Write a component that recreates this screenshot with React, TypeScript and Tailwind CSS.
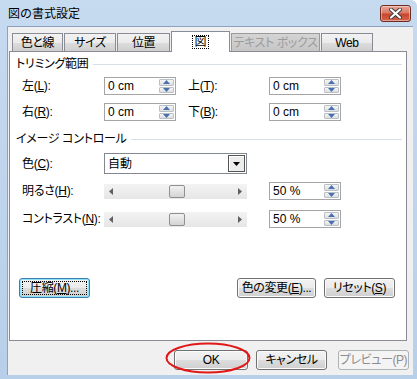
import React from "react";

const FONT = "font-['Liberation_Sans','Noto_Sans_CJK_JP',sans-serif] [font-feature-settings:'palt']";

function Spin() {
  return (
    <div className="flex flex-col w-[16px] h-full py-px pr-px gap-px">
      <div className="flex-1 flex items-center justify-center rounded-[1px] border border-[#b9c0c8] bg-gradient-to-b from-[#f6f6f6] to-[#dedede]">
        <svg width="7" height="4" viewBox="0 0 7 4"><path d="M0 4 L3.5 0 L7 4Z" fill="#4b70b0" /></svg>
      </div>
      <div className="flex-1 flex items-center justify-center rounded-[1px] border border-[#b9c0c8] bg-gradient-to-b from-[#f6f6f6] to-[#dedede]">
        <svg width="7" height="4" viewBox="0 0 7 4"><path d="M0 0 L3.5 4 L7 0Z" fill="#4b70b0" /></svg>
      </div>
    </div>
  );
}

function NumInput({ value }: { value: string }) {
  return (
    <div className="w-[72px] h-[18px] border border-[#a5a5a5] bg-white flex items-stretch">
      <div className="flex-1 flex items-center pl-[3px] text-[12px] leading-none">{value}</div>
      <Spin />
    </div>
  );
}

function Label({ main, k }: { main: string; k: string }) {
  return (
    <span className="text-[12px] leading-none whitespace-nowrap tracking-[-0.3px]">
      {main}(<span className="underline">{k}</span>):
    </span>
  );
}

function GroupLabel({ text }: { text: string }) {
  return (
    <div className="flex items-center h-[14px] pl-[6px] pr-[4px]">
      <span className="text-[12px] leading-none whitespace-nowrap tracking-[-0.3px]">{text}</span>
      <div className="flex-1 h-px bg-[#d5dfe5] ml-[5px]" />
    </div>
  );
}

function Slider({ pos }: { pos: number }) {
  return (
    <div className="w-[143px] h-[15px] bg-gradient-to-b from-[#f3f3f3] to-[#e6e6e6] flex items-center px-[5px] relative">
      <svg width="4" height="7" viewBox="0 0 4 7"><path d="M4 0 L0 3.5 L4 7Z" fill="#606060" /></svg>
      <div className="flex-1" />
      <svg width="4" height="7" viewBox="0 0 4 7"><path d="M0 0 L4 3.5 L0 7Z" fill="#606060" /></svg>
      <div
        className="absolute top-px w-[16px] h-[13px] rounded-[2px] border border-[#8e8f8f] bg-gradient-to-b from-[#f2f2f2] to-[#d4d4d4]"
        style={{ left: pos }}
      />
    </div>
  );
}

function Btn({ children, w, disabled, focused }: { children: React.ReactNode; w: string; disabled?: boolean; focused?: boolean }) {
  if (disabled) {
    return (
      <div className={`${w} h-[20px] rounded-[3px] border border-[#adb2b5] bg-[#f4f4f4] flex items-center justify-center text-[12px] leading-none whitespace-nowrap tracking-[-0.4px] text-[#8d8d8d]`}>
        {children}
      </div>
    );
  }
  return (
    <div
      className={`${w} h-[20px] rounded-[3px] border ${focused ? "border-[#3c7fb1] shadow-[inset_0_0_0_1px_#8fe1f9]" : "border-[#707070] shadow-[inset_0_0_0_1px_#fcfcfc]"} bg-[linear-gradient(to_bottom,#f2f2f2_0%,#ebebeb_50%,#dddddd_51%,#cfcfcf_100%)] flex items-center justify-center text-[12px] leading-none whitespace-nowrap tracking-[-0.4px] p-[2px]`}
    >
      <div className={`w-full h-full flex items-center justify-center ${focused ? "outline outline-1 outline-dotted outline-black -outline-offset-1" : ""}`}>
        {children}
      </div>
    </div>
  );
}

function Tab({ text, w, selected, disabled }: { text: string; w: string; selected?: boolean; disabled?: boolean }) {
  if (selected) {
    return (
      <div className={`${w} h-[21px] -mb-px relative z-10 bg-white border border-b-0 border-[#898c95] flex items-center justify-center`}>
        <span className="text-[12px] leading-[12px] px-px outline outline-1 outline-dotted outline-black">{text}</span>
      </div>
    );
  }
  return (
    <div
      className={`${w} h-[18px] border border-b-0 ${disabled ? "border-[#9a9a9a] bg-gradient-to-b from-[#d4d4d4] to-[#c6c6c6] text-[#9c9c9c]" : "border-[#898c95] bg-[linear-gradient(to_bottom,#f2f2f2_0%,#ebebeb_50%,#dddddd_51%,#cfcfcf_100%)]"} flex items-center justify-center text-[12px] leading-none whitespace-nowrap tracking-[-0.4px]`}
    >
      {text}
    </div>
  );
}

export default function App() {
  return (
    <div className={`w-[417px] h-[379px] overflow-hidden relative flex flex-col bg-gradient-to-b from-[#c6daf0] to-[#b8cfe9] rounded-tr-[6px] ${FONT} text-black`}>
      {/* title bar */}
      <div className="h-[26px] shrink-0 flex items-start pl-[8px] pr-[6px]">
        <span className="mt-[8px] text-[12px] leading-none [font-feature-settings:normal]">図の書式設定</span>
        <div className="ml-auto mt-[5px] w-[31px] h-[17px] rounded-[3px] border border-[#6e2c23] bg-[linear-gradient(to_bottom,#e8a596_0%,#d97c68_45%,#c8462e_55%,#d6634a_100%)] flex items-center justify-center shadow-[inset_0_0_0_1px_rgba(255,255,255,0.4)]">
          <svg width="13" height="11" viewBox="0 0 13 11">
            <path d="M2 1.5 L11 9.5 M11 1.5 L2 9.5" stroke="#3a3a3a" strokeWidth="4" strokeLinecap="round" />
            <path d="M2 1.5 L11 9.5 M11 1.5 L2 9.5" stroke="#ffffff" strokeWidth="2.2" strokeLinecap="round" />
          </svg>
        </div>
      </div>

      {/* client */}
      <div className="flex-1 ml-[7px] mr-[4px] mb-[4px] bg-[#f0f0f0] border-l border-t border-[#8da2bd] flex flex-col">
        {/* tabs */}
        <div className="flex items-end h-[24px] pl-[4px] gap-px pt-[4px]">
          <Tab text="色と線" w="w-[51px]" />
          <Tab text="サイズ" w="w-[52px]" />
          <Tab text="位置" w="w-[53px]" />
          <Tab text="図" w="w-[59px]" selected />
          <Tab text="テキスト ボックス" w="w-[89px]" disabled />
          <Tab text="Web" w="w-[52px]" />
        </div>

        {/* panel */}
        <div className="ml-[1px] w-[398px] h-[290px] border border-[#898c95] bg-white flex flex-col pt-[5px]">
          <GroupLabel text="トリミング範囲" />
          <div className="grid grid-cols-[82px_72px_12px_81px_72px] grid-rows-[18px_18px] gap-y-[8px] pl-[12px] mt-[6px] items-center">
            <Label main="左" k="L" />
            <NumInput value="0 cm" />
            <div />
            <Label main="上" k="T" />
            <NumInput value="0 cm" />
            <Label main="右" k="R" />
            <NumInput value="0 cm" />
            <div />
            <Label main="下" k="B" />
            <NumInput value="0 cm" />
          </div>

          <div className="mt-[11px]">
            <GroupLabel text="イメージ コントロール" />
          </div>

          <div className="grid grid-cols-[82px_143px_22px_72px] pl-[12px] mt-[7px] items-center">
            <Label main="色" k="C" />
            <div className="w-[143px] h-[21px] border border-[#828790] bg-white flex items-stretch">
              <div className="flex-1 flex items-center pl-[3px] text-[12px] leading-none">自動</div>
              <div className="w-[17px] m-px border border-[#555] bg-[#ececec] shadow-[inset_1px_1px_0_#fff] flex items-center justify-center">
                <svg width="7" height="4" viewBox="0 0 7 4"><path d="M0 0 L3.5 4 L7 0Z" fill="#000" /></svg>
              </div>
            </div>
            <div />
            <div />
          </div>

          <div className="grid grid-cols-[82px_143px_22px_72px] grid-rows-[18px_18px] gap-y-[10px] pl-[12px] mt-[8px] items-center">
            <Label main="明るさ" k="H" />
            <Slider pos={65} />
            <div />
            <NumInput value="50 %" />
            <Label main="コントラスト" k="N" />
            <Slider pos={65} />
            <div />
            <NumInput value="50 %" />
          </div>

          <div className="flex items-center mt-[50px] pl-[9px] pr-[11px]">
            <Btn w="w-[71px]" focused>圧縮(<span className="underline">M</span>)...</Btn>
            <div className="flex-1" />
            <Btn w="w-[79px]">色の変更(<span className="underline">E</span>)...</Btn>
            <div className="w-[8px]" />
            <Btn w="w-[71px]">リセット(<span className="underline">S</span>)</Btn>
          </div>
        </div>

        {/* bottom buttons */}
        <div className="flex items-center justify-end mt-[9px] pr-[4px]">
          <Btn w="w-[74px]">OK</Btn>
          <div className="w-[8px]" />
          <Btn w="w-[71px]">キャンセル</Btn>
          <div className="w-[11px]" />
          <Btn w="w-[71px]" disabled>プレビュー(P)</Btn>
        </div>
      </div>

      {/* red annotation ellipse */}
      <svg className="absolute left-[165px] top-[342px]" width="86" height="32" viewBox="0 0 86 32">
        <ellipse cx="43" cy="16" rx="41.5" ry="14.5" fill="none" stroke="#e01818" strokeWidth="2" />
      </svg>
    </div>
  );
}
